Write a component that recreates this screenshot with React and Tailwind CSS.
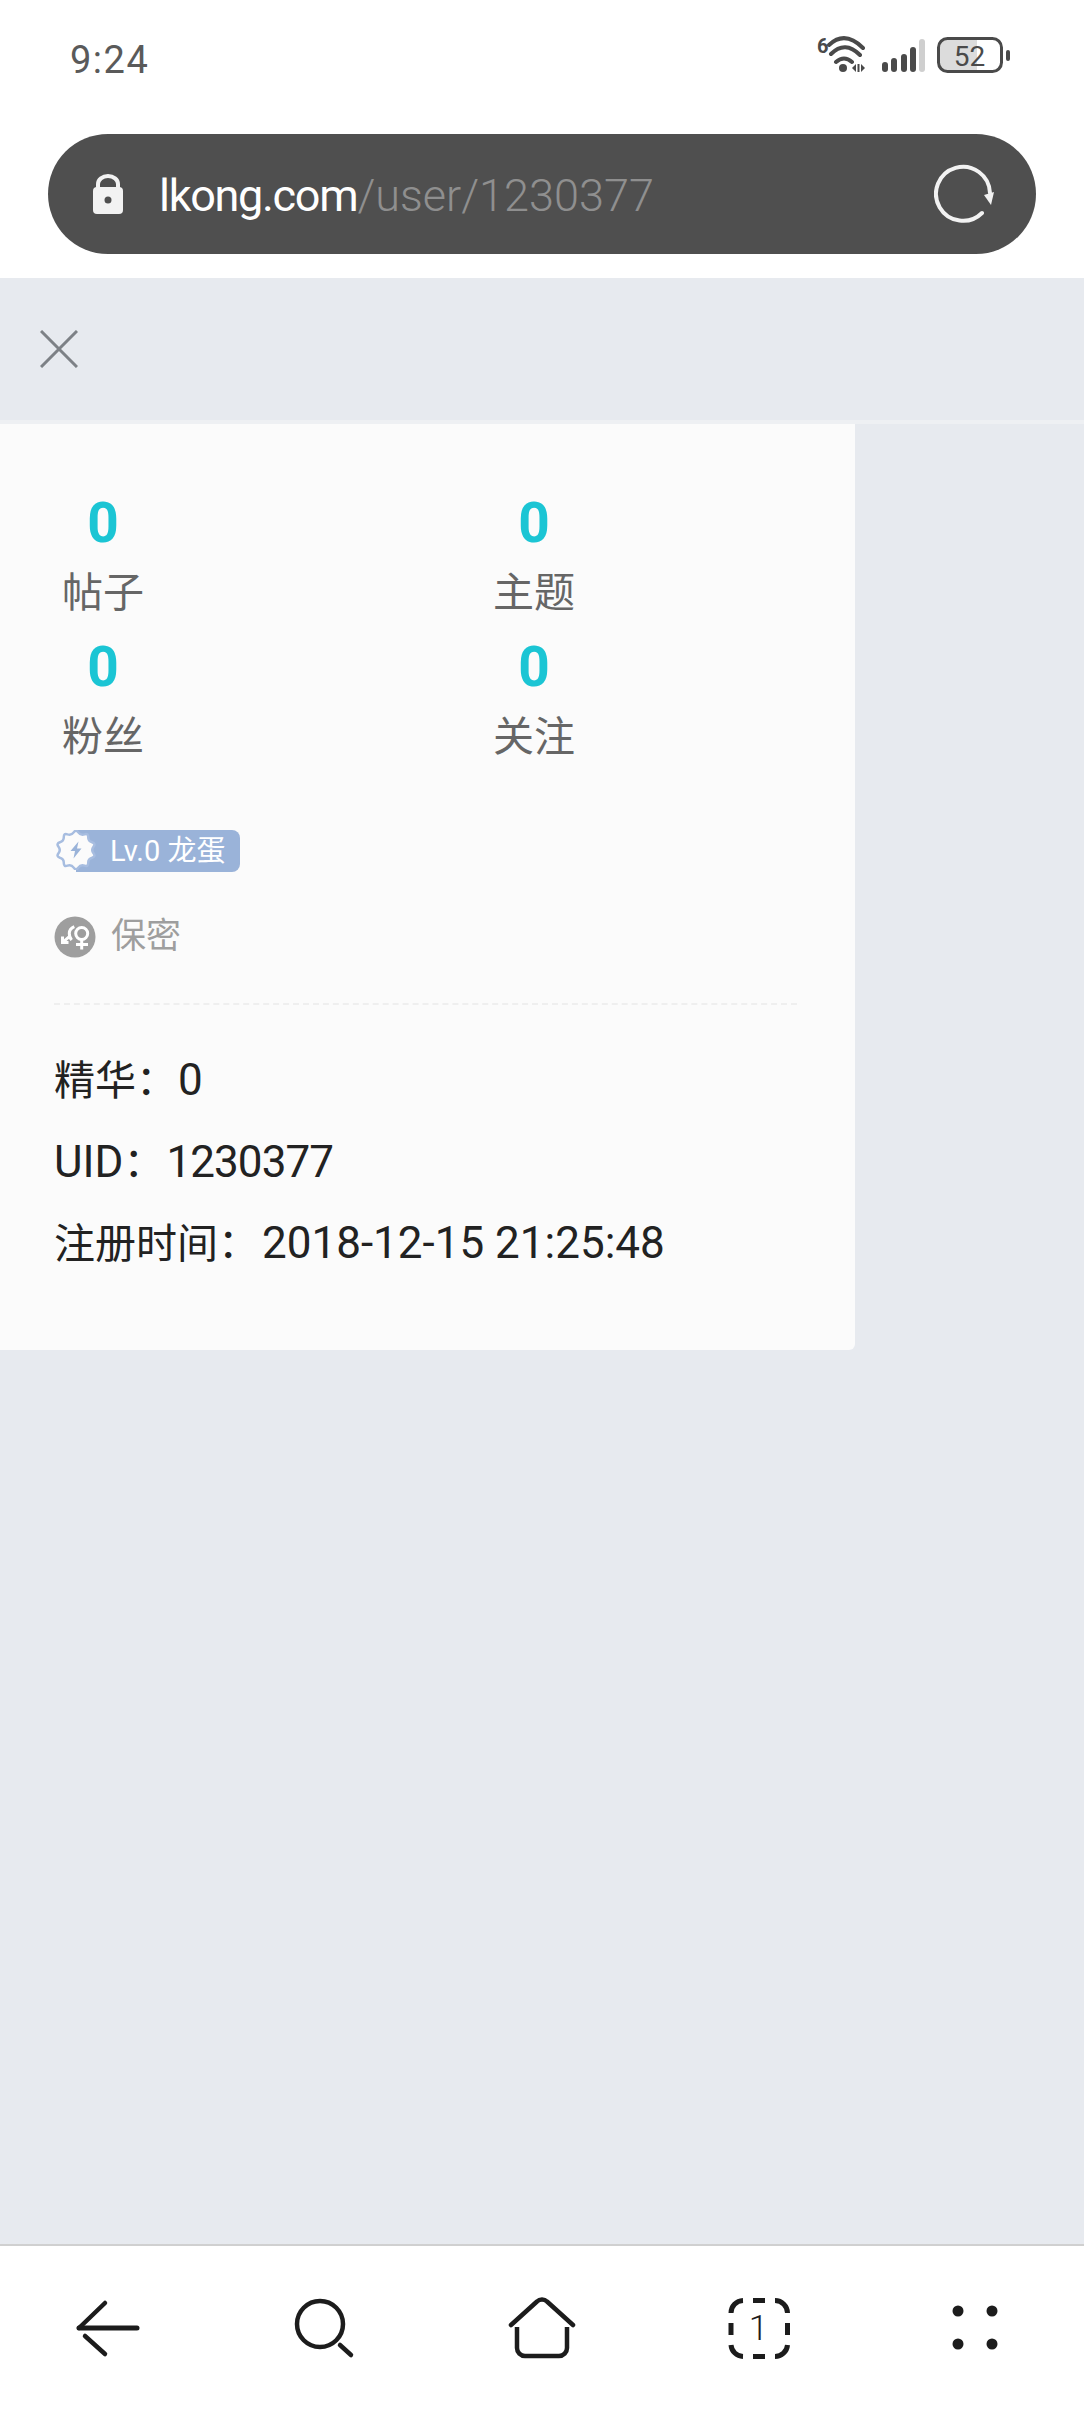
import React from 'react';

const stats = [
    { label: '帖子', value: 0 },
    { label: '主题', value: 0 },
    { label: '粉丝', value: 0 },
    { label: '关注', value: 0 },
];

// wavy badge outline, smoothed through the midpoints
const starVertices = Array.from({ length: 20 }, (_, i) => {
    const r = i % 2 === 0 ? 21 : 15;
    const a = (Math.PI * 2 * i) / 20 - Math.PI / 2;
    return [20 + r * Math.cos(a), 20 + r * Math.sin(a)];
});
const midpoint = (a, b) => `${((a[0] + b[0]) / 2).toFixed(1)} ${((a[1] + b[1]) / 2).toFixed(1)}`;
const starPath = `M${midpoint(starVertices[19], starVertices[0])}` + starVertices
    .map((v, i) => `Q${v[0].toFixed(1)} ${v[1].toFixed(1)} ${midpoint(v, starVertices[(i + 1) % 20])}`)
    .join('') + 'Z';

const StatusBar = () => (
    <div className="relative h-[134px] bg-white">
        <div className="pl-[70px] pt-[38px] text-[38px] leading-[44px] tracking-[1.5px] text-[#5a5a5a]">9:24</div>
        <div className="absolute left-[816px] top-[32px]">
            <svg width="196" height="44" viewBox="0 -4 196 44" fill="none">
                <text x="1" y="17" fontSize="20" fontWeight="700" fill="#4a4a4a" fontFamily="Roboto">6</text>
                <path d="M13 9Q29 -6 47 12M15 18Q29 4 44 19M20 26Q28 19 36 26" stroke="#4a4a4a" strokeWidth="4" strokeLinecap="round" />
                <circle cx="27" cy="32" r="4" fill="#4a4a4a" />
                <path d="M36 32l4-4v8zM41.500 28h2v8h-2zM45 28l4 4-4 4z" fill="#4a4a4a" />
                <rect x="66" y="26" width="6" height="10" rx="3" fill="#4a4a4a" />
                <rect x="75" y="22" width="6" height="14" rx="3" fill="#4a4a4a" />
                <rect x="85" y="18" width="6" height="18" rx="3" fill="#4a4a4a" />
                <rect x="94" y="11" width="6" height="25" rx="3" fill="#4a4a4a" />
                <rect x="103" y="3" width="6" height="33" rx="3" fill="#cfcfcf" />
                <path d="M130 3h31v32h-31a8 8 0 0 1 -8-8v-16a8 8 0 0 1 8-8z" fill="#dcdcdc" />
                <rect x="122.500" y="2.500" width="63" height="33" rx="9" stroke="#4a4a4a" strokeWidth="3" />
                <rect x="190" y="14" width="4" height="11" rx="2" fill="#4a4a4a" />
                <text x="153.500" y="30" textAnchor="middle" fontSize="28" fill="#4a4a4a" fontFamily="Roboto">52</text>
            </svg>
        </div>
    </div>
);

const AddressBar = () => (
    <div className="bg-white px-[48px] pb-[24px]">
        <div className="flex h-[120px] items-center rounded-[60px] bg-[#4f4f4f] pl-[45px] pr-[42px]">
            <svg width="30" height="40" viewBox="0 0 30 40" fill="none">
                <path d="M5 16v-6a10 8 0 0 1 20 0v6" stroke="#f2f2f2" strokeWidth="4" />
                <rect x="0" y="13" width="30" height="27" rx="4" fill="#f2f2f2" />
                <circle cx="15" cy="26" r="3.500" fill="#4f4f4f" />
            </svg>
            <div className="ml-[36px] flex-1 pt-[2px] text-[45px] leading-none tracking-[-1.3px] text-white">
                lkong.com<span className="font-light tracking-[0px] text-[#8f8f8f]">/user/1230377</span>
            </div>
            <svg width="60" height="60" viewBox="0 0 60 60" fill="none">
                <path d="M48 49A27 27 0 1 1 56 29" stroke="#f2f2f2" strokeWidth="4" strokeLinecap="round" />
                <path d="M50 31L60 28L57 41z" fill="#f2f2f2" />
            </svg>
        </div>
    </div>
);

const LevelBadge = () => (
    <div className="relative ml-[19px] flex h-[42px] w-[164px] items-center rounded-r-[8px] bg-[#9ab3d9] pl-[34px] text-[29px] leading-none text-white">
        <svg className="absolute left-[-20px] top-0" width="40" height="40" viewBox="0 0 40 40">
            <path d={starPath} fill="#fbfbfb" stroke="#a7bde0" strokeWidth="2.500" strokeLinejoin="round" />
            <path d="M22.500 11.500l-8 9.500h4.500l-1.500 7.500 8-10h-4.500z" fill="#9ab3d9" />
        </svg>
        Lv.0 龙蛋
    </div>
);

const GenderIcon = () => (
    <svg width="42" height="42" viewBox="0 0 42 42" fill="none">
        <circle cx="21" cy="21" r="20.500" fill="#9e9e9e" />
        <circle cx="27.700" cy="17.500" r="6" stroke="#fff" strokeWidth="3" />
        <path d="M27.700 23.500v10M22 28.500h12" stroke="#fff" strokeWidth="3" />
        <path d="M20.300 10.700Q15.300 13 15.300 17.300Q15.300 21.500 17.700 24M15.300 20.700L8.700 26.300M8.500 20.500v6h6" stroke="#fff" strokeWidth="3" />
    </svg>
);

const BottomNav = () => (
    <div className="h-[168px] border-t-2 border-[#d0d0d0] bg-white">
        <svg width="1084" height="166" viewBox="0 0 1084 166" fill="none" stroke="#1c1c1c" strokeWidth="4.500" strokeLinecap="round" strokeLinejoin="round">
            <path d="M105 57L79 82" />
            <path d="M79 82H137" strokeWidth="5" />
            <path d="M85 90L105 108" />
            <circle cx="320" cy="78" r="23" />
            <path d="M340 99L351 109" />
            <path d="M511 79L537 55.500a7 7 0 0 1 10 0L573 79" />
            <path d="M517 81V102a8 8 0 0 0 8 8H559a8 8 0 0 0 8-8V81" strokeLinecap="butt" />
            <g strokeWidth="5" strokeLinecap="butt">
                <path d="M731 67a12.500 12.500 0 0 1 12-12.500M775 54.500a12.500 12.500 0 0 1 12.500 12.500M787.500 99a12.500 12.500 0 0 1 -12.500 11.500M743 110.500a12.500 12.500 0 0 1 -12-11.500" />
                <path d="M753 54.500H765M753 110.500H765M731 77V89M787.500 77V89" />
            </g>
            <text x="758.500" y="94" textAnchor="middle" fontSize="35" fontWeight="300" fill="#1c1c1c" stroke="none" fontFamily="Roboto">1</text>
            <g fill="#1c1c1c" stroke="none">
                <circle cx="958" cy="65" r="5.500" />
                <circle cx="992" cy="65" r="5.500" />
                <circle cx="958" cy="98" r="5.500" />
                <circle cx="992" cy="98" r="5.500" />
            </g>
        </svg>
    </div>
);

const App = () => {
    return (
        <div className="flex h-[2412px] w-[1084px] flex-col overflow-hidden bg-[#e7eaef] font-['Roboto','Noto_Sans_CJK_SC',sans-serif]">
            <StatusBar />
            <AddressBar />
            <div className="flex h-[146px] items-center border-b-[4px] border-[#eef0f3] pl-[40px]">
                <svg width="38" height="38" viewBox="0 0 38 38" fill="none" stroke="#7d8186" strokeWidth="3">
                    <path d="M1 1L37 37M37 1L1 37" />
                </svg>
            </div>
            <div className="h-[926px] w-[855px] rounded-br-[6px] bg-[#fbfbfb]">
                <div className="grid grid-cols-[84px_84px] gap-x-[347px] pl-[61px] pt-[68px]">
                    {stats.map(stat => (
                        <div key={stat.label} className="flex h-[143.500px] flex-col items-center">
                            <div className="text-[55px] font-bold leading-[62px] text-[#1bc5d4]">{stat.value}</div>
                            <div className="mt-[15px] whitespace-nowrap text-[41px] leading-[48px] text-[#666666]">{stat.label}</div>
                        </div>
                    ))}
                </div>
                <div className="pl-[57px] pt-[51px]">
                    <LevelBadge />
                </div>
                <div className="mt-[44px] flex items-center pl-[54px]">
                    <GenderIcon />
                    <span className="ml-[15px] text-[35px] leading-[42px] text-[#9e9e9e]">保密</span>
                </div>
                <div className="ml-[54px] mt-[45px] w-[743px] border-t-2 border-dashed border-[#efefef]" />
                <div className="pl-[54px] pt-[35px] text-[41px] leading-[80.500px] text-[#222222]">
                    <div>精华：<span className="ml-[1px] text-[44px]">0</span></div>
                    <div><span className="text-[44px]">UID</span>：<span className="ml-[2px] text-[44px] tracking-[-0.9px]">1230377</span></div>
                    <div>注册时间：<span className="ml-[3px] text-[44px]">2018-12-15 21:25:48</span></div>
                </div>
            </div>
            <div className="flex-1" />
            <BottomNav />
        </div>
    );
};

export default App;
